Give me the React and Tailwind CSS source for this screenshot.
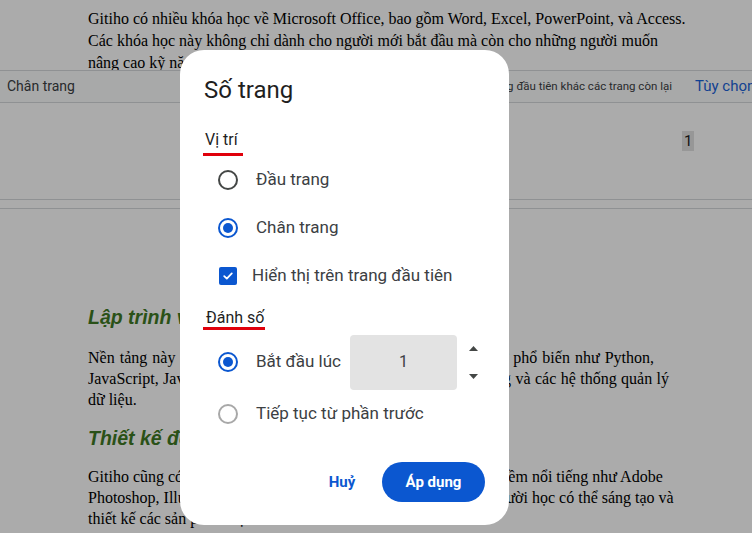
export default function App() {
  const serif = { fontFamily: '"Liberation Serif", "Times New Roman", serif' };
  const just = "whitespace-nowrap text-justify [text-align-last:justify]";
  return (
    <div className="relative w-[752px] h-[533px] overflow-hidden bg-white" style={{ fontFamily: 'Roboto, "Noto Sans", sans-serif' }}>
      {/* underlying document */}
      <div className="flex flex-col">
        <div className="pl-[88px] pt-[8px] text-[16px] leading-[22px] text-black h-[70px] overflow-hidden" style={serif}>
          <div className="whitespace-nowrap">Gitiho có nhiều khóa học về Microsoft Office, bao gồm Word, Excel, PowerPoint, và Access.</div>
          <div className="whitespace-nowrap">Các khóa học này không chỉ dành cho người mới bắt đầu mà còn cho những người muốn</div>
          <div className="whitespace-nowrap">nâng cao kỹ năng của mình trong công việc hàng ngày.</div>
        </div>
        {/* footer bar */}
        <div className="h-[33px] border-y border-[#d6d8db] bg-[#fbfcfd] flex items-center">
          <span className="pl-[7px] text-[14px] text-[#3c4043]">Chân trang</span>
          <span className="ml-auto text-[11.5px] text-[#3c4043] whitespace-nowrap">Trang đầu tiên khác các trang còn lại</span>
          <span className="ml-[23px] w-[57px] shrink-0 text-[15px] text-[#1a63d8] whitespace-nowrap">Tùy chọn</span>
        </div>
        <div className="h-[96px] relative">
          <span className="absolute left-[682px] top-[28px] text-[15px] leading-[20px] px-[2px] bg-[#e2e2e2] text-[#222]">1</span>
        </div>
        <div className="h-[10px] border-y border-[#d6d8db]"></div>
        <div className="pl-[88px] pt-[94px]">
          <div className="text-[19.5px] leading-[28px] font-bold italic text-[#3f7a25] whitespace-nowrap" style={{ fontFamily: '"Liberation Sans", Arial, sans-serif' }}>Lập trình và phát triển phần mềm</div>
          <div className="mt-[16px] text-[16px] leading-[21px] text-black" style={serif}>
            <div className={`${just} w-[566px]`}>Nền tảng này cung cấp các khóa học lập trình với các ngôn ngữ phổ biến như Python,</div>
            <div className={`${just} w-[581px]`}>JavaScript, Java, C++ cùng các công cụ phát triển web, ứng dụng và các hệ thống quản lý</div>
            <div className="whitespace-nowrap">dữ liệu.</div>
          </div>
          <div className="mt-[14px] text-[19.5px] leading-[28px] font-bold italic text-[#3f7a25] whitespace-nowrap" style={{ fontFamily: '"Liberation Sans", Arial, sans-serif' }}>Thiết kế đồ họa</div>
          <div className="mt-[14px] text-[16px] leading-[21px] text-black" style={serif}>
            <div className={`${just} w-[571px]`}>Gitiho cũng có các khóa học về thiết kế đồ họa số với các phần mềm nổi tiếng như Adobe</div>
            <div className={`${just} w-[585px]`}>Photoshop, Illustrator, InDesign, Lightroom và Premiere, giúp người học có thể sáng tạo và</div>
            <div className="whitespace-nowrap">thiết kế các sản phẩm độc đáo.</div>
          </div>
        </div>
      </div>

      {/* overlay */}
      <div className="absolute inset-0 bg-black/[0.33]"></div>

      {/* dialog */}
      <div className="absolute left-[180px] top-[50px] w-[329px] h-[475px] rounded-[24px] bg-white flex flex-col pt-[24px]">
        <div className="pl-[24px] text-[24px] leading-[32px] text-[#1f1f1f]">Số trang</div>

        <div className="mt-[22px] pl-[25px] text-[16px] leading-[24px] text-[#1f1f1f]">Vị trí</div>
        <div className="ml-[23px] mt-[1px] w-[40px] h-[3px] bg-[#e0000b]"></div>

        <div className="h-[47px] flex items-center pl-[38px]">
          <span className="w-[20px] h-[20px] rounded-full border-2 border-[#444746]"></span>
          <span className="ml-[18px] text-[17px] text-[#3c4043]">Đầu trang</span>
        </div>
        <div className="h-[49px] flex items-center pl-[38px]">
          <span className="w-[20px] h-[20px] rounded-full border-2 border-[#0b57d0] flex items-center justify-center">
            <span className="w-[10px] h-[10px] rounded-full bg-[#0b57d0]"></span>
          </span>
          <span className="ml-[18px] text-[17px] text-[#3c4043]">Chân trang</span>
        </div>
        <div className="h-[48px] flex items-center pl-[39px]">
          <span className="w-[18px] h-[18px] rounded-[2px] bg-[#0b57d0] flex items-center justify-center">
            <svg width="12" height="12" viewBox="0 0 12 12"><path d="M2.2 6.2 L4.8 8.6 L9.8 3.4" fill="none" stroke="white" strokeWidth="1.8" strokeLinecap="round" strokeLinejoin="round" /></svg>
          </span>
          <span className="ml-[15px] text-[17px] text-[#3c4043]">Hiển thị trên trang đầu tiên</span>
        </div>

        <div className="mt-[9px] pl-[26px] text-[16px] leading-[18px] text-[#1f1f1f]">Đánh số</div>
        <div className="ml-[23px] w-[62px] h-[3px] bg-[#e0000b]"></div>

        <div className="mt-[4px] h-[56px] flex items-center pl-[38px]">
          <span className="w-[20px] h-[20px] rounded-full border-2 border-[#0b57d0] flex items-center justify-center">
            <span className="w-[10px] h-[10px] rounded-full bg-[#0b57d0]"></span>
          </span>
          <span className="ml-[18px] w-[94px] text-[17px] text-[#3c4043] whitespace-nowrap">Bắt đầu lúc</span>
          <div className="w-[107px] h-[55px] rounded-[4px] bg-[#e3e3e3] flex items-center justify-center text-[16px] text-[#3c4043]">1</div>
          <div className="ml-[12px] h-[55px] flex flex-col justify-between py-[11px]">
            <svg width="9" height="5" viewBox="0 0 9 5"><path d="M0 5 L4.5 0 L9 5 Z" fill="#444746" /></svg>
            <svg width="9" height="5" viewBox="0 0 9 5"><path d="M0 0 L9 0 L4.5 5 Z" fill="#444746" /></svg>
          </div>
        </div>
        <div className="h-[48px] flex items-center pl-[38px]">
          <span className="w-[20px] h-[20px] rounded-full border-2 border-[#a8a8a8]"></span>
          <span className="ml-[18px] text-[17px] text-[#3c4043]">Tiếp tục từ phần trước</span>
        </div>

        <div className="mt-[24px] flex items-center justify-end pr-[24px] gap-[10px]">
          <button className="w-[60px] h-[40px] text-[15px] font-bold text-[#0b57d0]">Huỷ</button>
          <button className="w-[103px] h-[40px] rounded-full bg-[#0b57d0] text-[15px] font-bold text-white">Áp dụng</button>
        </div>
      </div>
    </div>
  );
}
